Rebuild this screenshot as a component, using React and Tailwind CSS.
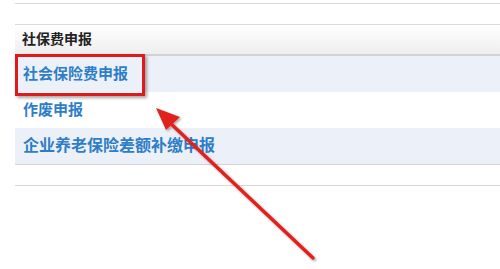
export default function App() {
  const font = { fontFamily: '"Liberation Sans", "Noto Sans CJK SC", sans-serif' };
  return (
    <div className="relative w-[500px] h-[269px] bg-white overflow-hidden" style={font}>
      <div className="ml-[15px] pt-[3px]">
        <div className="border-t border-[#dcdcdc] h-[21px]" />
        <div className="border-t border-[#d9d9d9] h-[32px] bg-gradient-to-b from-white to-[#eeeeee] flex items-center pl-[7px] border-b-2 border-b-[#d2d2d2]">
          <span className="text-[14px] font-bold text-[#222]">社保费申报</span>
        </div>
        <div className="h-[36px] bg-[#ecf1f9] flex items-center pl-[8px]">
          <span className="text-[15px] font-bold text-[#2e7dc8]">社会保险费申报</span>
        </div>
        <div className="h-[36px] bg-white flex items-center pl-[8px]">
          <span className="text-[15px] font-bold text-[#2e7dc8]">作废申报</span>
        </div>
        <div className="h-[37px] bg-[#ecf1f9] flex items-center pl-[8px] border-b border-[#d4d4d4]">
          <span className="text-[16px] font-bold text-[#2e7dc8]">企业养老保险差额补缴申报</span>
        </div>
        <div className="h-[21px] border-b border-[#d8d8d8]" />
      </div>
      {/* highlight box */}
      <div className="absolute left-[15px] top-[54px] w-[130px] h-[42px] border-[3px] border-[#e01a1a] shadow-[2px_2px_3px_rgba(0,0,0,0.35)]" />
      {/* arrow */}
      <svg className="absolute left-0 top-0" width="500" height="269" viewBox="0 0 500 269">
        <defs>
          <filter id="sh" x="-20%" y="-20%" width="140%" height="140%">
            <feDropShadow dx="1.5" dy="1.5" stdDeviation="1.2" floodColor="#000" floodOpacity="0.35" />
          </filter>
        </defs>
        <g filter="url(#sh)">
          <line x1="313" y1="258" x2="168" y2="121" stroke="#e0231c" strokeWidth="3.5" strokeLinecap="round" />
          <polygon points="156,108 180,117 166,130" fill="#e0231c" />
        </g>
      </svg>
    </div>
  );
}
